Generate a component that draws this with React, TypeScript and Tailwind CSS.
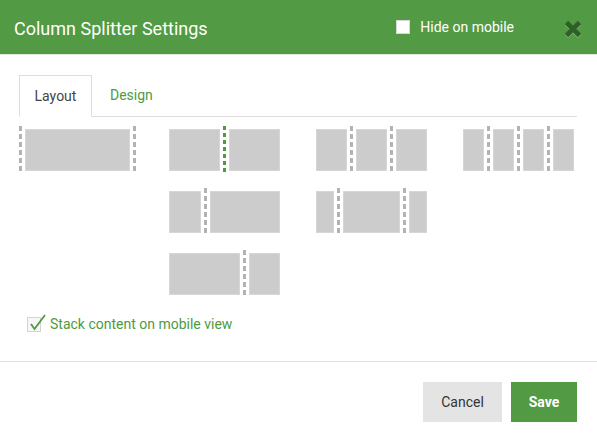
import React from "react";

const font = { fontFamily: "Roboto, 'Liberation Sans', sans-serif" };

function Dash({ green = false }: { green?: boolean }) {
  return (
    <div
      className={
        green
          ? "w-[3px] h-full bg-[repeating-linear-gradient(to_bottom,#4e9a3f_0px,#4e9a3f_4px,transparent_4px,transparent_7px)]"
          : "w-[3px] h-full bg-[repeating-linear-gradient(to_bottom,#b3b3b3_0px,#b3b3b3_5px,transparent_5px,transparent_8px)]"
      }
    />
  );
}

function Sep({ green = false }: { green?: boolean }) {
  return (
    <div className="w-[9px] h-full flex justify-center shrink-0">
      <Dash green={green} />
    </div>
  );
}

function Box({ w }: { w?: number }) {
  return (
    <div
      className="h-[42px] bg-[#cccccc] border border-[#d6d6d6] shrink-0"
      style={w ? { width: w } : { flex: 1 }}
    />
  );
}

function Cell({ children }: { children: React.ReactNode }) {
  return <div className="h-[48px] w-[111px] flex items-center">{children}</div>;
}

export default function App() {
  return (
    <div className="w-[597px] h-[442px] bg-white overflow-hidden" style={font}>
      {/* Header */}
      <div className="h-[55px] bg-[#529a43] border-b border-[#dfeadc] flex items-center pl-[14px] pr-[15px]">
        <div className="text-white text-[18px] leading-none pt-[3px]">Column Splitter Settings</div>
        <div className="ml-auto flex items-center">
          <div className="w-[14px] h-[14px] bg-white border border-[#d8d8d8]" />
          <span className="ml-[10px] text-white text-[14px]">Hide on mobile</span>
        </div>
        <div className="ml-[50px] w-[18px] h-[18px] relative mt-[3px]">
          <svg width="18" height="18" viewBox="0 0 18 18" className="absolute left-0 top-[1px]">
            <path d="M2.5 2.5 L15.5 15.5 M15.5 2.5 L2.5 15.5" stroke="#7dbb6c" strokeWidth="4.6" />
          </svg>
          <svg width="18" height="18" viewBox="0 0 18 18" className="absolute left-0 top-0">
            <path d="M2.5 2.5 L15.5 15.5 M15.5 2.5 L2.5 15.5" stroke="#2f5f29" strokeWidth="4.6" />
          </svg>
        </div>
      </div>

      {/* Body */}
      <div className="h-[307px] pt-[20px] pl-[19px] pr-[20px] border-b border-[#e3e3e3]">
        <div className="flex border-b border-[#dddddd] h-[42px]">
          <div className="h-[42px] w-[73px] border border-[#dddddd] border-b-white bg-white flex items-center justify-center text-[14px] text-[#444444]">
            Layout
          </div>
          <div className="h-[41px] pl-[18px] flex items-center text-[14px] text-[#4e9a3f]">Design</div>
        </div>

        <div className="mt-[9px] ml-[3px] grid grid-cols-[repeat(4,111px)] gap-x-[36px] gap-y-[14px]">
          {/* Row 1 */}
          <div className="h-[48px] w-[117px] -ml-[3px] flex items-center">
            <div className="h-full"><Dash /></div>
            <div className="mx-[3px] flex-1 flex"><Box /></div>
            <div className="h-full"><Dash /></div>
          </div>
          <Cell>
            <Box />
            <Sep green />
            <Box />
          </Cell>
          <Cell>
            <Box />
            <Sep />
            <Box />
            <Sep />
            <Box />
          </Cell>
          <Cell>
            <Box />
            <Sep />
            <Box />
            <Sep />
            <Box />
            <Sep />
            <Box />
          </Cell>

          {/* Row 2 */}
          <div />
          <Cell>
            <Box w={32} />
            <Sep />
            <Box />
          </Cell>
          <Cell>
            <Box w={18} />
            <Sep />
            <Box />
            <Sep />
            <Box w={18} />
          </Cell>
          <div />

          {/* Row 3 */}
          <div />
          <Cell>
            <Box />
            <Sep />
            <Box w={31} />
          </Cell>
          <div />
          <div />
        </div>

        <div className="mt-[16px] ml-[8px] flex items-center h-[20px]">
          <div className="relative w-[14px] h-[15px] bg-[#f7f7f7] border border-[#d4d4d4]">
            <svg width="20" height="18" viewBox="0 0 20 18" className="absolute left-[1px] top-[-4px]">
              <path d="M2 10 L5.5 15 L16 1" stroke="#4e9a3f" strokeWidth="1.8" fill="none" />
            </svg>
          </div>
          <span className="ml-[9px] text-[14px] text-[#4e9a3f]">Stack content on mobile view</span>
        </div>
      </div>

      {/* Footer */}
      <div className="h-[80px] flex items-center justify-end pr-[20px] gap-[9px]">
        <button className="w-[79px] h-[40px] bg-[#e4e4e4] text-[#333333] text-[14px]">Cancel</button>
        <button className="w-[66px] h-[40px] bg-[#529a43] text-white text-[14px] font-bold">Save</button>
      </div>
    </div>
  );
}
